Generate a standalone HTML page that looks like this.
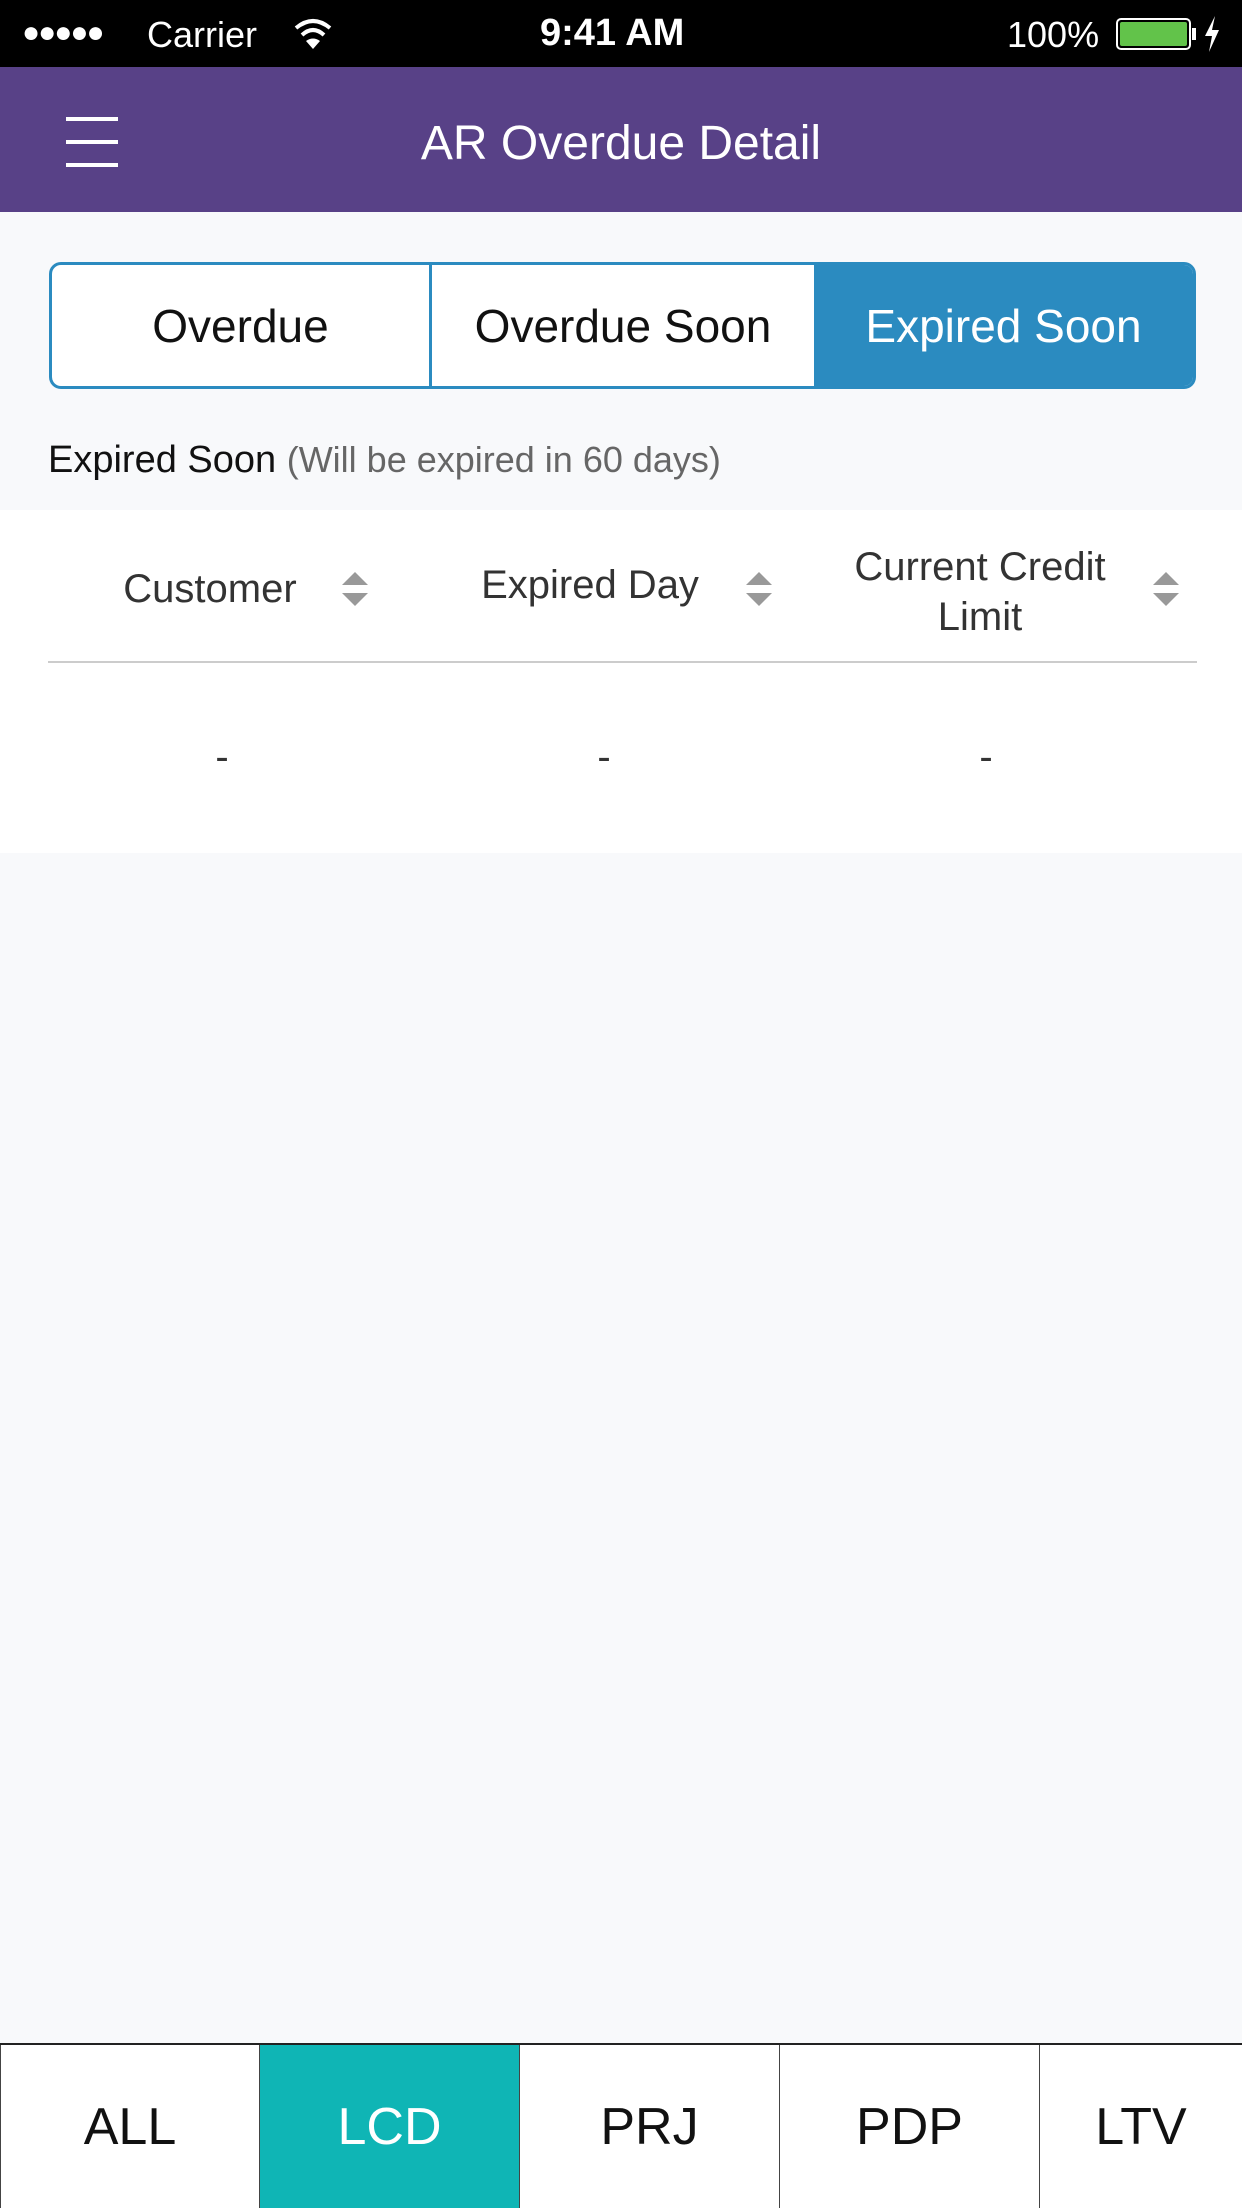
<!DOCTYPE html>
<html><head><meta charset="utf-8"><style>
*{margin:0;padding:0;box-sizing:border-box}
body{width:1242px;height:2208px;background:#f8f9fb;font-family:"Liberation Sans",sans-serif;position:relative;overflow:hidden}
.abs{position:absolute}
#status{left:0;top:0;width:1242px;height:67px;background:#000;color:#fff;font-size:36px}
#nav{left:0;top:67px;width:1242px;height:145px;background:#584187;color:#fff}
.seg{left:49px;top:262px;width:1147px;height:127px;border:3px solid #2b8bc0;border-radius:12px;overflow:hidden;background:#fff;display:flex}
.seg div{display:flex;align-items:center;justify-content:center;font-size:46px;color:#111}
.th{font-size:40px;color:#333;text-align:center;line-height:50px}
.sort{width:26px;height:34px}
.tabs{left:0;top:2043px;width:1242px;height:165px;border-top:2px solid #222;display:flex;background:#fff}
.tabs div{flex:0 0 260px;display:flex;align-items:center;justify-content:center;font-size:52px;color:#111;border-right:1px solid #444}
</style></head><body>
<div id="status" class="abs">
 <div class="abs" style="left:22px;top:16px;font-size:30px;letter-spacing:-2px">●●●●●</div>
 <div class="abs" style="left:147px;top:14px">Carrier</div>
 <svg class="abs" style="left:293px;top:16px" width="40" height="36" viewBox="0 0 40 36"><path d="M3 12 Q20 -2 37 12" stroke="#fff" stroke-width="4" fill="none"/><path d="M9 19 Q20 9 31 19" stroke="#fff" stroke-width="4" fill="none"/><path d="M20 33 L13 25 Q20 20 27 25 Z" fill="#fff"/></svg>
 <div class="abs" style="left:540px;top:12px;font-weight:bold;font-size:38px">9:41 AM</div>
 <div class="abs" style="left:1007px;top:14px">100%</div>
 <div class="abs" style="left:1116px;top:18px;width:75px;height:32px;border:2px solid #fff;border-radius:5px;padding:2px"><div style="width:100%;height:100%;background:#62c34a;border-radius:2px"></div></div>
 <div class="abs" style="left:1192px;top:28px;width:4px;height:12px;background:#fff"></div>
 <svg class="abs" style="left:1203px;top:16px" width="18" height="36" viewBox="0 0 18 36"><path d="M12 0 L2 20 H9 L6 36 L16 14 H9 Z" fill="#fff"/></svg>
</div>
<div id="nav" class="abs">
 <div class="abs" style="left:66px;top:50px;width:52px;height:4px;background:#fff"></div>
 <div class="abs" style="left:66px;top:73px;width:52px;height:4px;background:#fff"></div>
 <div class="abs" style="left:66px;top:96px;width:52px;height:4px;background:#fff"></div>
 <div class="abs" style="left:0;width:1242px;top:49px;text-align:center;font-size:48px">AR Overdue Detail</div>
</div>
<div class="seg abs">
 <div style="width:380px;border-right:3px solid #2b8bc0">Overdue</div>
 <div style="width:382px">Overdue Soon</div>
 <div style="flex:1;background:#2b8bc0;color:#fff">Expired Soon</div>
</div>
<div class="abs" style="left:48px;top:439px;font-size:38px;color:#111">Expired Soon <span style="color:#666;font-size:36px">(Will be expired in 60 days)</span></div>
<div class="abs" style="left:0;top:510px;width:1242px;height:343px;background:#fff">
 <div class="abs th" style="left:100px;top:54px;width:220px">Customer</div>
 <div class="abs th" style="left:460px;top:50px;width:260px">Expired Day</div>
 <div class="abs th" style="left:820px;top:32px;width:320px">Current Credit<br>Limit</div>
 <svg class="abs sort" style="left:342px;top:62px" viewBox="0 0 26 34"><path d="M13 0 L26 13 H0 Z M13 34 L26 21 H0 Z" fill="#999"/></svg>
 <svg class="abs sort" style="left:746px;top:62px" viewBox="0 0 26 34"><path d="M13 0 L26 13 H0 Z M13 34 L26 21 H0 Z" fill="#999"/></svg>
 <svg class="abs sort" style="left:1153px;top:62px" viewBox="0 0 26 34"><path d="M13 0 L26 13 H0 Z M13 34 L26 21 H0 Z" fill="#999"/></svg>
 <div class="abs" style="left:48px;top:151px;width:1149px;height:2px;background:#ccc"></div>
 <div class="abs th" style="left:172px;top:222px;width:100px">-</div>
 <div class="abs th" style="left:554px;top:222px;width:100px">-</div>
 <div class="abs th" style="left:936px;top:222px;width:100px">-</div>
</div>
<div class="tabs abs">
 <div style="border-left:1px solid #444">ALL</div>
 <div style="background:#0fb5b5;color:#fff">LCD</div>
 <div>PRJ</div>
 <div>PDP</div>
 <div style="border-right:none;flex:1 1 auto">LTV</div>
</div>
</body></html>
